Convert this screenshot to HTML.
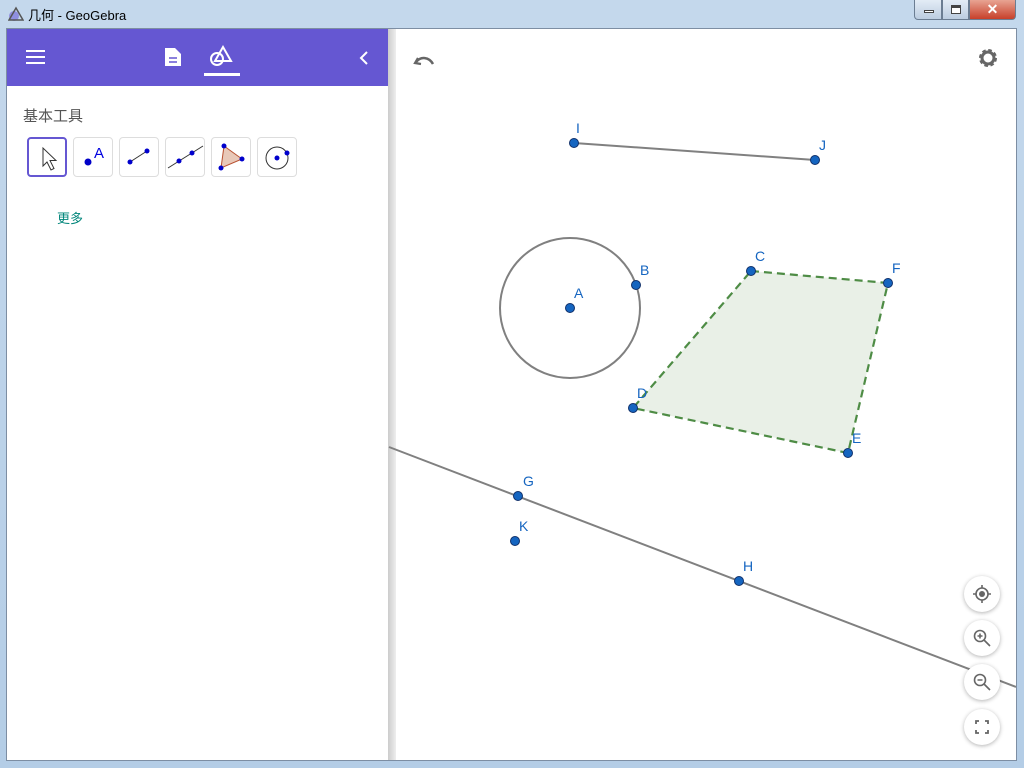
<!DOCTYPE html>
<html><head><meta charset="utf-8"><style>
*{margin:0;padding:0;box-sizing:border-box}
body{width:1024px;height:768px;overflow:hidden;background:linear-gradient(#c4d8ec,#b4cde6);font-family:"Liberation Sans","Noto Sans CJK SC",sans-serif;position:relative}
.title{position:absolute;left:28px;top:5px;font-size:13px;color:#000}
.client{position:absolute;left:7px;top:29px;width:1009px;height:731px;background:#fff;box-shadow:0 0 0 1px #7d8ea3;overflow:hidden}
.top{position:absolute;left:0;top:0;width:381px;height:57px;background:#6557d2}
.panel{position:absolute;left:0;top:57px;width:381px;height:680px;background:#fff}
.div{position:absolute;left:381px;top:0;width:8px;height:731px;background:linear-gradient(90deg,#ccc,#eee)}
.tb{position:absolute;top:108px;width:40px;height:40px;border:1px solid #ddd;border-radius:4px;background:#fff}
.zb{position:absolute;left:957px;width:36px;height:36px;border-radius:50%;background:#fff;box-shadow:0 1px 4px rgba(0,0,0,.3)}
.btn{position:absolute;top:0;height:20px;border:1px solid #6b7d92;border-top:none}
</style></head><body>
<svg style="position:absolute;left:8px;top:6px" width="16" height="16"><circle cx="6" cy="10" r="5" fill="#8f8fe0"/><path d="M8 2L15 14H1Z" fill="none" stroke="#555" stroke-width="1.5"/></svg>
<div class="title">几何 - GeoGebra</div>
<div class="btn" style="left:914px;width:28px;background:linear-gradient(#e3ecf6,#bccde0);border-radius:0 0 0 4px"><div style="position:absolute;left:9px;top:10px;width:10px;height:3px;background:#fff;border:1px solid #444"></div></div>
<div class="btn" style="left:942px;width:27px;background:linear-gradient(#e3ecf6,#bccde0)"><div style="position:absolute;left:8px;top:5px;width:10px;height:9px;border:1px solid #444;border-top-width:3px;background:#fff"></div></div>
<div class="btn" style="left:969px;width:47px;background:linear-gradient(#e8a493,#c7402a);border-radius:0 0 4px 0;color:#fff;font-weight:bold;font-size:14px;text-align:center;line-height:18px">✕</div>
<div class="client">
<div class="top">
<svg style="position:absolute;left:19px;top:21px" width="20" height="14"><path d="M0 1h19M0 7h19M0 13h19" stroke="#fff" stroke-width="2"/></svg>
<svg style="position:absolute;left:157px;top:18px" width="18" height="20"><path d="M1 1h10l6 6v12H1Z" fill="#fff"/><path d="M5 11h8M5 15h8" stroke="#6557d2" stroke-width="1.6"/></svg>
<svg style="position:absolute;left:202px;top:16px" width="24" height="22"><circle cx="8" cy="14" r="6" fill="none" stroke="#fff" stroke-width="2"/><path d="M14 2L22 16H6Z" fill="none" stroke="#fff" stroke-width="2"/></svg>
<div style="position:absolute;left:197px;top:44px;width:36px;height:3px;background:#fff"></div>
<svg style="position:absolute;left:352px;top:22px" width="10" height="14"><path d="M8 1L2 7l6 6" fill="none" stroke="#fff" stroke-width="2"/></svg>
</div>
<div class="panel">
<div style="position:absolute;left:16px;top:19px;font-size:15px;color:#555">基本工具</div>
<div style="position:absolute;left:50px;top:122px;font-size:13px;color:#00857a">更多</div>
</div>
<div class="tb" style="left:20px;border:2px solid #6557d2"><svg width="38" height="38"><path d="M14 9v18l4-4 4 8 3-1.5-4-8h6Z" fill="#fff" stroke="#333"/></svg></div>
<div class="tb" style="left:66px"><svg width="40" height="40"><circle cx="14" cy="24" r="3.5" fill="#0000c8"/><text x="20" y="20" font-size="15" fill="#0000e0" font-family="Liberation Sans">A</text></svg></div>
<div class="tb" style="left:112px"><svg width="40" height="40"><path d="M10 24L27 13" stroke="#333"/><circle cx="10" cy="24" r="2.5" fill="#00c"/><circle cx="27" cy="13" r="2.5" fill="#00c"/></svg></div>
<div class="tb" style="left:158px"><svg width="40" height="40"><path d="M2 30L37 8" stroke="#333"/><circle cx="13" cy="23" r="2.5" fill="#00c"/><circle cx="26" cy="15" r="2.5" fill="#00c"/></svg></div>
<div class="tb" style="left:204px"><svg width="40" height="40"><path d="M12 8L30 21L9 30Z" fill="#e8c8b8" stroke="#b85030"/><circle cx="12" cy="8" r="2.5" fill="#00c"/><circle cx="30" cy="21" r="2.5" fill="#00c"/><circle cx="9" cy="30" r="2.5" fill="#00c"/></svg></div>
<div class="tb" style="left:250px"><svg width="40" height="40"><circle cx="19" cy="20" r="11" fill="none" stroke="#333"/><circle cx="19" cy="20" r="2.5" fill="#00c"/><circle cx="29" cy="15" r="2.5" fill="#00c"/></svg></div>
<div class="div"></div>
<svg style="position:absolute;left:-7px;top:-29px" width="1024" height="768" font-family="Liberation Sans" font-size="14" fill="#1565c0">
<g stroke="#808080" stroke-width="2" fill="none">
<path d="M574 143L815 160"/><circle cx="570" cy="308" r="70"/><path d="M389 447L1016 687"/></g>
<path d="M751 271L888 283L848 453L633 408Z" fill="#e9f0e7" stroke="#4e8c45" stroke-width="2.2" stroke-dasharray="8,5"/>
<g fill="#1565c0" stroke="#10306a" stroke-width="1">
<circle cx="574" cy="143" r="4.5"/><circle cx="815" cy="160" r="4.5"/><circle cx="570" cy="308" r="4.5"/><circle cx="636" cy="285" r="4.5"/><circle cx="751" cy="271" r="4.5"/><circle cx="888" cy="283" r="4.5"/><circle cx="633" cy="408" r="4.5"/><circle cx="848" cy="453" r="4.5"/><circle cx="518" cy="496" r="4.5"/><circle cx="515" cy="541" r="4.5"/><circle cx="739" cy="581" r="4.5"/></g>
<text x="576" y="133">I</text><text x="819" y="150">J</text><text x="574" y="298">A</text><text x="640" y="275">B</text><text x="755" y="261">C</text><text x="892" y="273">F</text><text x="637" y="398">D</text><text x="852" y="443">E</text><text x="523" y="486">G</text><text x="519" y="531">K</text><text x="743" y="571">H</text>
<path d="M418 58l-3 5 6 1" fill="none" stroke="#666" stroke-width="2.2"/><path d="M416 62c5-6 13-5 17 2" fill="none" stroke="#666" stroke-width="2.5"/>
<g transform="translate(988 58)"><circle r="7" fill="none" stroke="#666" stroke-width="4" stroke-dasharray="3.2,2.3"/><circle r="6" fill="none" stroke="#666" stroke-width="3"/><circle r="2.5" fill="#fff"/></g>
</svg>
<div class="zb" style="top:547px"><svg width="36" height="36"><circle cx="18" cy="18" r="6" fill="none" stroke="#666" stroke-width="1.6"/><circle cx="18" cy="18" r="3" fill="#666"/><path d="M18 9v3M18 24v3M9 18h3M24 18h3" stroke="#666" stroke-width="1.6"/></svg></div>
<div class="zb" style="top:591px"><svg width="36" height="36"><circle cx="16" cy="16" r="5.5" fill="none" stroke="#666" stroke-width="1.6"/><path d="M20 20l6 6M13.5 16h5M16 13.5v5" stroke="#666" stroke-width="1.6"/></svg></div>
<div class="zb" style="top:635px"><svg width="36" height="36"><circle cx="16" cy="16" r="5.5" fill="none" stroke="#666" stroke-width="1.6"/><path d="M20 20l6 6M13.5 16h5" stroke="#666" stroke-width="1.6"/></svg></div>
<div class="zb" style="top:680px"><svg width="36" height="36"><path d="M12 15v-3h3M21 12h3v3M24 21v3h-3M15 24h-3v-3" fill="none" stroke="#666" stroke-width="1.8"/></svg></div>
</div>
</body></html>
